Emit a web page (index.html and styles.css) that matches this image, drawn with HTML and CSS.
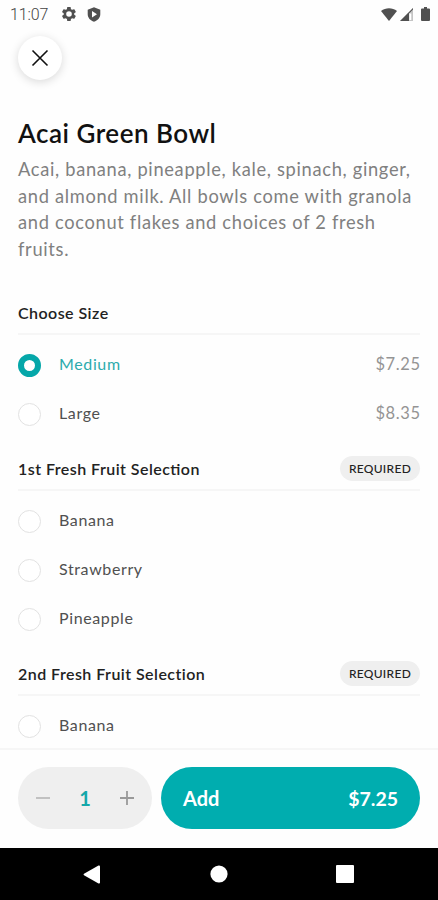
FILE: index.html
```html
<!DOCTYPE html>
<html lang="en">
<head>
<meta charset="utf-8">
<title>Acai Green Bowl</title>
<link rel="stylesheet" href="styles.css">
</head>
<body>
<div class="phone">
  <div class="status">
    <span class="time">11:07</span>
    <svg class="gear" width="14" height="14" viewBox="2 2 20 20"><path fill="#505050" fill-rule="evenodd" d="M19.4 13a7.500 7.500 0 0 0 0-2l2.100-1.600c.2-.2.3-.4.1-.6l-2-3.500c-.1-.2-.4-.3-.6-.2l-2.500 1a7 7 0 0 0-1.700-1l-.4-2.700a.5.5 0 0 0-.5-.4h-4a.5.5 0 0 0-.5.4L9 5.100a7 7 0 0 0-1.700 1l-2.500-1c-.2-.1-.5 0-.6.2l-2 3.500c-.1.200-.1.400.1.600L4.500 11a7.500 7.500 0 0 0 0 2l-2.200 1.600c-.2.200-.2.400-.1.600l2 3.500c.1.200.4.300.6.200l2.500-1a7 7 0 0 0 1.700 1l.4 2.700c0 .2.200.4.500.4h4c.2 0 .4-.2.5-.4l.4-2.700a7 7 0 0 0 1.700-1l2.500 1c.2.100.5 0 .6-.2l2-3.500c.1-.2.100-.4-.1-.6zM12 16a4 4 0 1 1 0-8 4 4 0 0 1 0 8z"/></svg>
    <svg class="shield" width="14" height="15" viewBox="0 0 14 15"><path fill="#505050" fill-rule="evenodd" d="M7 .3 13.300 2.700V7.300C13.300 10.800 10.600 13.700 7 14.700 3.400 13.700.7 10.800.7 7.300V2.700zM5 4v6.400l5-3.200z"/></svg>
    <span class="grow"></span>
    <svg width="16" height="13" viewBox="0 0 16 13"><path fill="#505050" d="M0 3C4.600-.8 11.400-.8 16 3L8 13z"/></svg>
    <svg class="signal" width="13" height="13" viewBox="0 0 13 13"><path fill="#c4c4c4" d="M0 13 13 0v13z"/><path fill="#505050" d="M0 13 13 0v1.500L9 5.500V13z"/><path fill="#fff" d="M9.300 5.500h2V12h-2z"/></svg>
    <svg class="battery" width="9" height="14" viewBox="0 0 9 14"><path fill="#505050" d="M3 0h3v1.500h2q1 0 1 1V13q0 1-1 1H1q-1 0-1-1V2.500q0-1 1-1h2z"/></svg>
  </div>
  <main class="content">
    <button class="close" aria-label="Close"><svg width="18" height="18" viewBox="0 0 18 18"><path d="M1.500 1.500l15 15M16.500 1.500l-15 15" stroke="#111" stroke-width="1.600" fill="none"/></svg></button>
    <h1>Acai Green Bowl</h1>
    <p class="desc">Acai, banana, pineapple, kale, spinach, ginger,<br>and almond milk. All bowls come with granola<br>and coconut flakes and choices of 2 fresh<br>fruits.</p>
    <section>
      <div class="head"><h2>Choose Size</h2></div>
      <div class="row on"><i class="radio"></i><span>Medium</span><span class="price">$7.25</span></div>
      <div class="row"><i class="radio"></i><span>Large</span><span class="price">$8.35</span></div>
    </section>
    <section>
      <div class="head"><h2 class="joined">1st Fresh Fruit Selection</h2><span class="tag">REQUIRED</span></div>
      <div class="row"><i class="radio"></i><span>Banana</span></div>
      <div class="row"><i class="radio"></i><span>Strawberry</span></div>
      <div class="row"><i class="radio"></i><span>Pineapple</span></div>
    </section>
    <section>
      <div class="head"><h2>2nd Fresh Fruit Selection</h2><span class="tag">REQUIRED</span></div>
      <div class="row"><i class="radio"></i><span>Banana</span></div>
    </section>
  </main>
  <footer class="bar">
    <div class="stepper">
      <svg width="14" height="14" viewBox="0 0 14 14"><path d="M0 7h14" stroke="#bcbcbc" stroke-width="1.800"/></svg>
      <span class="qty">1</span>
      <svg width="14" height="14" viewBox="0 0 14 14"><path d="M0 7h14M7 0v14" stroke="#999" stroke-width="1.800"/></svg>
    </div>
    <button class="add"><span>Add</span><span class="total">$7.25</span></button>
  </footer>
  <nav class="nav">
    <svg width="18" height="19" viewBox="0 0 18 19"><path fill="#fff" d="M1 8.700 15.500.6Q17 .2 17 1.500v16q0 1.300-1.500.9L1 10.300Q0 9.500 1 8.700z"/></svg>
    <svg width="18" height="18" viewBox="0 0 18 18"><circle cx="9" cy="9" r="8.600" fill="#fff"/></svg>
    <svg width="18" height="18" viewBox="0 0 18 18"><rect width="18" height="18" rx="1" fill="#fff"/></svg>
  </nav>
</div>
</body>
</html>
```
FILE: styles.css
```css
* { box-sizing: border-box; }
body { margin: 0; background: #fefefe; font-family: Lato, sans-serif; }
h1, h2, p { margin: 0; }
button { border: 0; padding: 0; font: inherit; }
svg { display: block; flex: none; }
.phone { height: 900px; display: flex; flex-direction: column; overflow: hidden; }
.status { height: 28px; flex: none; display: flex; align-items: center; padding: 0 8px 0 10px; }
.time { font: 300 16px Roboto, sans-serif; color: #444; width: 52px; letter-spacing: -.1px; }
.shield { margin-left: 11px; }
.grow { flex: 1; }
.signal { margin-left: 3px; }
.battery { margin-left: 8px; }
.content { flex: 1; min-height: 0; overflow: hidden; padding: 8px 18px 0; }
.close { width: 44px; height: 44px; border-radius: 50%; background: #fff; display: grid; place-items: center; box-shadow: 0 2px 10px rgba(0,0,0,.15); }
h1 { margin-top: 37px; font-size: 26px; line-height: 32px; font-weight: 600; color: #111; letter-spacing: .5px; white-space: nowrap; }
.desc { margin-top: 7px; font-size: 18.300px; line-height: 26.700px; color: #808080; letter-spacing: .68px; white-space: nowrap; }
section { margin-bottom: 10px; }
.desc + section { margin-top: 30px; }
.head { height: 42px; display: flex; align-items: center; justify-content: space-between; border-bottom: 2px solid #f6f6f6; margin-bottom: 6px; }
h2 { font-size: 16px; line-height: 20px; font-weight: 600; color: #222; letter-spacing: .45px; }
.joined { font-feature-settings: "liga" 1; }
.tag { width: 80px; height: 25px; border-radius: 13px; background: #efefef; color: #222; font-size: 12px; font-weight: 500; line-height: 26px; text-align: center; letter-spacing: .3px; }
.row { height: 49px; display: flex; align-items: center; font-size: 16px; line-height: 20px; color: #505050; letter-spacing: .62px; }
.row span { padding-bottom: 2px; }
.radio { width: 23px; height: 23px; border: 1.500px solid #e2e2e2; border-radius: 50%; margin-right: 18px; background: #fff; }
.on { color: #2cabad; }
.on .radio { border: 6.500px solid #05a7a9; }
.row .price { margin-left: auto; color: #949494; font-size: 16.500px; letter-spacing: .6px; margin-right: -.6px; }
.bar { flex: none; height: 100px; border-top: 2px solid #f6f6f6; padding: 17px 18px 0; display: flex; gap: 9px; background: #fefefe; }
.stepper { width: 134px; height: 62px; border-radius: 31px; background: #efefef; display: flex; align-items: center; justify-content: space-between; padding: 0 18px; }
.qty { font-size: 20px; font-weight: 700; color: #14a8aa; }
.add { flex: 1; height: 62px; border-radius: 31px; background: #00adaf; color: #fff; font-size: 20px; font-weight: 700; display: flex; align-items: center; justify-content: space-between; padding: 0 22px; }
.total { font-size: 19.500px; }
.nav { flex: none; height: 52px; background: #000; display: flex; align-items: center; justify-content: space-between; padding: 0 84px 0 83px; }
```
